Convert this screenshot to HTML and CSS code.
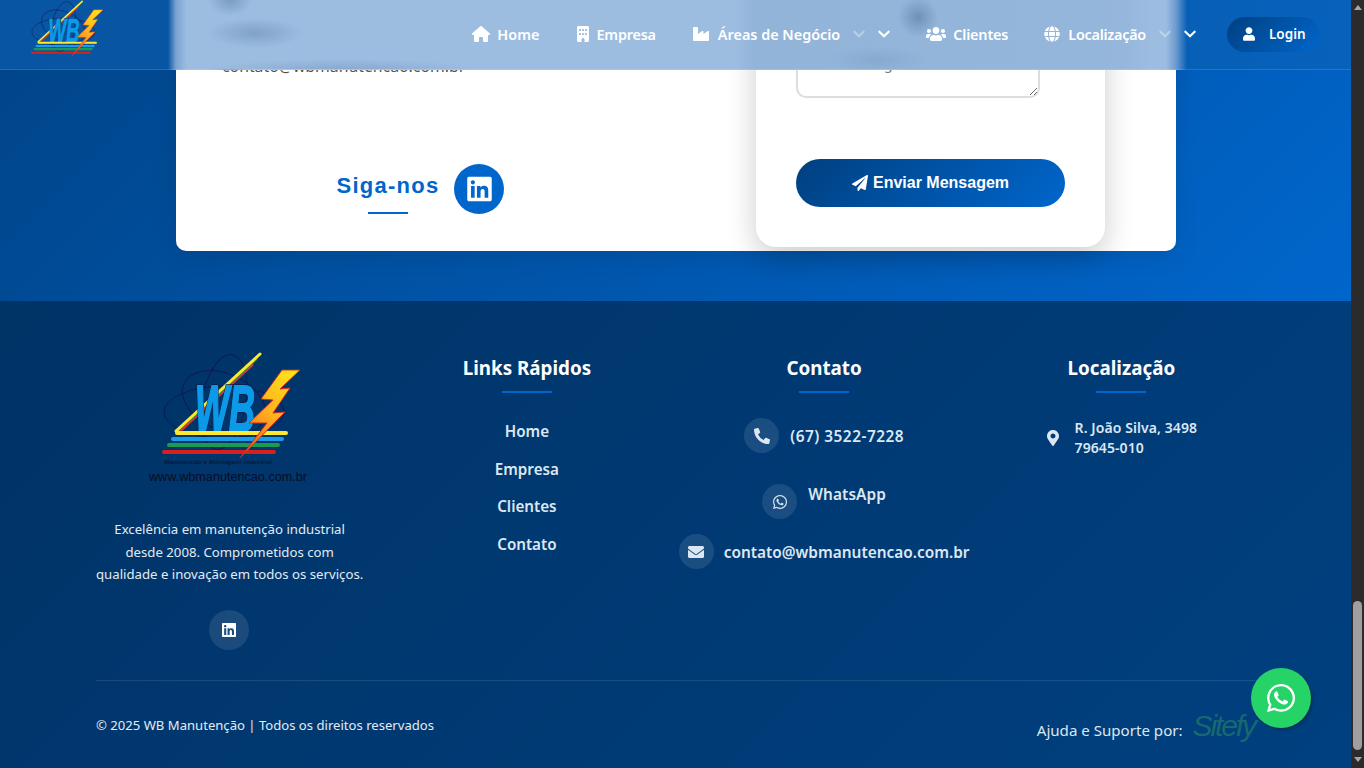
FILE: index.html
```html
<!DOCTYPE html>
<html lang="pt-BR">
<head>
<meta charset="utf-8">
<title>WB Manutenção</title>
<link rel="stylesheet" href="styles.css">
</head>
<body>
<svg class="defs" aria-hidden="true">
  <defs>
    <linearGradient id="bolt" x1="0.8" y1="0" x2="0.2" y2="1">
      <stop offset="0" stop-color="#ffe21a"/><stop offset="0.5" stop-color="#ffb020"/><stop offset="1" stop-color="#f0561e"/>
    </linearGradient>
    <symbol id="logo-mark" viewBox="0 0 200 120">
      <g fill="none" stroke="#0d1a55" stroke-width="1">
        <ellipse cx="94" cy="72" rx="60" ry="26"/>
        <ellipse cx="94" cy="62" rx="44" ry="28" transform="rotate(25 94 62)"/>
        <ellipse cx="94" cy="62" rx="22" ry="48" transform="rotate(10 94 62)"/>
      </g>
      <g fill="none" stroke-linecap="round">
        <path d="M50 91 L122 25" stroke="#d5362e" stroke-width="3"/>
        <path d="M48 90 L126 19" stroke="#1c9a52" stroke-width="3"/>
        <path d="M46 91 L130 14" stroke="#ffe92e" stroke-width="3"/>
      </g>
      <text x="65" y="91" class="logo-wb logo-wb-back" textLength="60" lengthAdjust="spacingAndGlyphs">WB</text>
      <text x="65" y="91" class="logo-wb" textLength="60" lengthAdjust="spacingAndGlyphs">WB</text>
      <g fill="none" stroke-width="4" stroke-linecap="round">
        <path d="M47 93 H156" stroke="#ffe92e"/>
        <path d="M43 99 H152" stroke="#1b9ce8"/>
        <path d="M39 105 H148" stroke="#1c9a52"/>
        <path d="M34 112 H144" stroke="#d5221f"/>
      </g>
      <polygon points="170,30 152,30 131,59 143,60 119,83 137,83 110,118 155,72 143,73 160,48 150,49" fill="url(#bolt)" stroke="#d62a20" stroke-width="1"/>
    </symbol>
    <symbol id="logo-text" viewBox="0 0 200 150">
      <text x="34" y="124" class="logo-tag" textLength="108" lengthAdjust="spacingAndGlyphs">Manutenção e Montagem Industrial</text>
      <text x="19" y="141" class="logo-url" textLength="158" lengthAdjust="spacingAndGlyphs">www.wbmanutencao.com.br</text>
    </symbol>
    <symbol id="i-home" viewBox="0 0 576 512"><path d="M575.8 255.5c0 18-15 32.1-32 32.1h-32l.7 160.2c0 2.7-.2 5.4-.5 8.1V472c0 22.1-17.9 40-40 40H456c-1.1 0-2.2 0-3.3-.1c-1.4 .1-2.8 .1-4.2 .1H416 392c-22.1 0-40-17.9-40-40V448 384c0-17.7-14.3-32-32-32H256c-17.7 0-32 14.3-32 32v64 24c0 22.1-17.9 40-40 40H160 128.1c-1.5 0-3-.1-4.5-.2c-1.2 .1-2.4 .2-3.6 .2H104c-22.1 0-40-17.9-40-40V360c0-.9 0-1.9 .1-2.8V287.6H32c-18 0-32-14-32-32.1c0-9 3-17 10-24L266.4 8c7-7 15-8 22-8s15 2 21 7L564.8 231.5c8 7 12 15 11 24z"/></symbol>
    <symbol id="i-building" viewBox="0 0 384 512"><path d="M48 0C21.5 0 0 21.5 0 48V464c0 26.5 21.5 48 48 48h96V432c0-26.5 21.5-48 48-48s48 21.5 48 48v80h96c26.5 0 48-21.5 48-48V48c0-26.5-21.5-48-48-48H48zM64 240c0-8.8 7.2-16 16-16h32c8.8 0 16 7.2 16 16v32c0 8.8-7.2 16-16 16H80c-8.8 0-16-7.2-16-16V240zm112-16h32c8.8 0 16 7.2 16 16v32c0 8.8-7.2 16-16 16H176c-8.8 0-16-7.2-16-16V240c0-8.8 7.2-16 16-16zm80 16c0-8.8 7.2-16 16-16h32c8.8 0 16 7.2 16 16v32c0 8.8-7.2 16-16 16H272c-8.8 0-16-7.2-16-16V240zM80 96h32c8.8 0 16 7.2 16 16v32c0 8.8-7.2 16-16 16H80c-8.8 0-16-7.2-16-16V112c0-8.8 7.2-16 16-16zm80 16c0-8.8 7.2-16 16-16h32c8.8 0 16 7.2 16 16v32c0 8.8-7.2 16-16 16H176c-8.8 0-16-7.2-16-16V112zM272 96h32c8.8 0 16 7.2 16 16v32c0 8.8-7.2 16-16 16H272c-8.8 0-16-7.2-16-16V112c0-8.8 7.2-16 16-16z"/></symbol>
    <symbol id="i-industry" viewBox="0 0 512 512"><path d="M475.115 163.781L336 252.309v-68.28c0-18.916-20.931-30.399-36.885-20.248L160 252.309V56c0-13.255-10.745-24-24-24H24C10.745 32 0 42.745 0 56v400c0 13.255 10.745 24 24 24h464c13.255 0 24-10.745 24-24V184.029c0-18.917-20.931-30.399-36.885-20.248z"/></symbol>
    <symbol id="i-users" viewBox="0 0 640 512"><path d="M96 224c35.3 0 64-28.7 64-64s-28.7-64-64-64-64 28.7-64 64 28.7 64 64 64zm448 0c35.3 0 64-28.7 64-64s-28.7-64-64-64-64 28.7-64 64 28.7 64 64 64zm32 32h-64c-17.6 0-33.5 7.1-45.1 18.6 40.3 22.1 68.9 62 75.1 109.4h66c17.7 0 32-14.3 32-32v-32c0-35.3-28.7-64-64-64zm-256 0c61.9 0 112-50.1 112-112S381.9 32 320 32 208 82.1 208 144s50.1 112 112 112zm76.8 32h-8.3c-20.8 10-43.9 16-68.5 16s-47.6-6-68.5-16h-8.3C179.6 288 128 339.6 128 403.2V432c0 26.5 21.5 48 48 48h288c26.5 0 48-21.5 48-48v-28.8c0-63.6-51.6-115.2-115.2-115.2zm-223.7-13.4C161.5 263.1 145.6 256 128 256H64c-35.3 0-64 28.7-64 64v32c0 17.7 14.3 32 32 32h65.9c6.3-47.4 34.9-87.3 75.2-109.4z"/></symbol>
    <symbol id="i-globe" viewBox="0 0 496 512"><path d="M336.5 160C322 70.7 287.8 8 248 8s-74 62.7-88.5 152h177zM152 256c0 22.2 1.2 43.5 3.3 64h185.3c2.1-20.5 3.3-41.8 3.3-64s-1.2-43.5-3.3-64H155.3c-2.1 20.5-3.3 41.8-3.3 64zm324.7-96c-28.6-67.9-86.5-120.4-158-141.6 24.4 33.8 41.2 84.7 50 141.6h108zM177.2 18.4C105.8 39.6 47.8 92.1 19.3 160h108c8.7-56.9 25.5-107.8 49.9-141.6zM487.4 192H372.7c2.1 21 3.3 42.5 3.3 64s-1.2 43-3.3 64h114.6c5.5-20.5 8.6-41.8 8.6-64s-3.1-43.5-8.5-64zM120 256c0-21.5 1.2-43 3.3-64H8.6C3.2 212.5 0 233.8 0 256s3.2 43.5 8.6 64h114.6c-2-21-3.2-42.5-3.2-64zm39.5 96c14.5 89.3 48.7 152 88.5 152s74-62.7 88.5-152h-177zm159.3 141.6c71.4-21.2 129.4-73.7 158-141.6h-108c-8.8 56.9-25.6 107.8-50 141.6zM19.3 352c28.6 67.9 86.5 120.4 158 141.6-24.4-33.8-41.2-84.7-50-141.6h-108z"/></symbol>
    <symbol id="i-user" viewBox="0 0 448 512"><path d="M224 256c70.7 0 128-57.3 128-128S294.7 0 224 0 96 57.3 96 128s57.3 128 128 128zm89.6 32h-16.7c-22.2 10.2-46.9 16-72.9 16s-50.6-5.8-72.9-16h-16.7C60.2 288 0 348.2 0 422.4V464c0 26.5 21.5 48 48 48h352c26.5 0 48-21.5 48-48v-41.6c0-74.2-60.2-134.4-134.4-134.4z"/></symbol>
    <symbol id="i-chev" viewBox="0 0 448 512"><path d="M207.029 381.476L12.686 187.132c-9.373-9.373-9.373-24.569 0-33.941l22.667-22.667c9.357-9.357 24.522-9.375 33.901-.04L224 284.505l154.745-154.021c9.379-9.335 24.544-9.317 33.901.04l22.667 22.667c9.373 9.373 9.373 24.569 0 33.941L240.971 381.476c-9.373 9.372-24.569 9.372-33.942 0z"/></symbol>
    <symbol id="i-plane" viewBox="0 0 512 512"><path d="M476 3.2L12.5 270.6c-18.1 10.4-15.8 35.6 2.2 43.2L121 358.4l287.3-253.2c5.5-4.9 13.3 2.6 8.6 8.3L176 407v80.5c0 23.6 28.5 32.9 42.5 15.8L282 426l124.6 52.2c14.2 6 30.4-2.9 33-18.2l72-432C515 7.8 493.3-6.8 476 3.2z"/></symbol>
    <symbol id="i-phone" viewBox="0 0 512 512"><path d="M497.39 361.8l-112-48a24 24 0 0 0-28 6.9l-49.6 60.6A370.66 370.66 0 0 1 130.6 204.11l60.6-49.6a23.94 23.94 0 0 0 6.9-28l-48-112A24.16 24.16 0 0 0 122.6.61l-104 24A24 24 0 0 0 0 48c0 256.5 207.9 464 464 464a24 24 0 0 0 23.4-18.6l24-104a24.29 24.29 0 0 0-14.01-27.6z"/></symbol>
    <symbol id="i-mail" viewBox="0 0 512 512"><path d="M502.3 190.8c3.9-3.1 9.7-.2 9.7 4.7V400c0 26.5-21.5 48-48 48H48c-26.5 0-48-21.5-48-48V195.6c0-5 5.7-7.8 9.7-4.7 22.4 17.4 52.1 39.5 154.1 113.6 21.1 15.4 56.7 47.8 92.2 47.6 35.7.3 72-32.8 92.3-47.6 102-74.1 131.6-96.3 154-113.7zM256 320c23.2.4 56.6-29.2 73.4-41.4 132.7-96.3 142.8-104.7 173.4-128.7 5.8-4.5 9.2-11.5 9.2-18.9v-19c0-26.5-21.5-48-48-48H48C21.5 64 0 85.5 0 112v19c0 7.4 3.4 14.3 9.2 18.9 30.6 23.9 40.7 32.4 173.4 128.7 16.8 12.2 50.2 41.8 73.4 41.4z"/></symbol>
    <symbol id="i-pin" viewBox="0 0 384 512"><path d="M172.268 501.67C26.97 291.031 0 269.413 0 192 0 85.961 85.961 0 192 0s192 85.961 192 192c0 77.413-26.97 99.031-172.268 309.67-9.535 13.774-29.93 13.773-39.464 0zM192 272c44.183 0 80-35.817 80-80s-35.817-80-80-80-80 35.817-80 80 35.817 80 80 80z"/></symbol>
    <symbol id="i-linkedin" viewBox="0 0 448 512"><path d="M416 32H31.9C14.3 32 0 46.5 0 64.3v383.4C0 465.5 14.3 480 31.9 480H416c17.6 0 32-14.5 32-32.3V64.3c0-17.8-14.4-32.3-32-32.3zM135.4 416H69V202.2h66.5V416zm-33.2-243c-21.3 0-38.5-17.3-38.5-38.5S80.9 96 102.2 96c21.2 0 38.5 17.3 38.5 38.5 0 21.3-17.2 38.5-38.5 38.5zm282.1 243h-66.4V312c0-24.8-.5-56.7-34.5-56.7-34.6 0-39.9 27-39.9 54.9V416h-66.4V202.2h63.7v29.2h.9c8.9-16.8 30.6-34.5 62.9-34.5 67.2 0 79.7 44.3 79.7 101.9V416z"/></symbol>
    <symbol id="i-whatsapp" viewBox="0 0 448 512"><path d="M380.9 97.1C339 55.1 283.2 32 223.9 32c-122.4 0-222 99.6-222 222 0 39.1 10.2 77.3 29.6 111L0 480l117.7-30.9c32.4 17.7 68.9 27 106.1 27h.1c122.3 0 224.1-99.6 224.1-222 0-59.3-25.2-115-67.1-157zm-157 341.6c-33.2 0-65.7-8.9-94-25.7l-6.7-4-69.8 18.3L72 359.2l-4.4-7c-18.5-29.4-28.2-63.3-28.2-98.2 0-101.7 82.8-184.5 184.6-184.5 49.3 0 95.6 19.2 130.4 54.1 34.8 34.9 56.2 81.2 56.1 130.5 0 101.8-84.9 184.6-186.6 184.6zm101.2-138.2c-5.5-2.8-32.8-16.2-37.9-18-5.1-1.9-8.8-2.8-12.5 2.8-3.7 5.6-14.3 18-17.6 21.8-3.2 3.7-6.5 4.2-12 1.4-32.6-16.3-54-29.1-75.5-66-5.7-9.8 5.7-9.1 16.3-30.3 1.8-3.7.9-6.9-.5-9.7-1.4-2.8-12.5-30.1-17.1-41.2-4.5-10.8-9.1-9.3-12.5-9.5-3.2-.2-6.9-.2-10.6-.2-3.7 0-9.7 1.4-14.8 6.9-5.1 5.6-19.4 19-19.4 46.3 0 27.3 19.9 53.7 22.6 57.4 2.8 3.7 39.1 59.7 94.8 83.8 35.2 15.2 49 16.5 66.6 13.9 10.7-1.6 32.8-13.4 37.4-26.4 4.6-13 4.6-24.1 3.2-26.4-1.3-2.5-5-3.9-10.5-6.6z"/></symbol>
  </defs>
</svg>

<div class="page">
  <header class="site-header">
    <svg class="header-logo"><use href="#logo-mark"/></svg>
    <nav class="nav">
      <a class="nav-item item-home"><svg class="ni ni-home"><use href="#i-home"/></svg>Home</a>
      <a class="nav-item item-empresa"><svg class="ni ni-building"><use href="#i-building"/></svg>Empresa</a>
      <a class="nav-item item-areas"><svg class="ni ni-industry"><use href="#i-industry"/></svg>Áreas de Negócio<svg class="chev chev-faded"><use href="#i-chev"/></svg><svg class="chev"><use href="#i-chev"/></svg></a>
      <a class="nav-item item-clientes"><svg class="ni ni-users"><use href="#i-users"/></svg>Clientes</a>
      <a class="nav-item item-loc"><svg class="ni ni-globe"><use href="#i-globe"/></svg>Localização<svg class="chev chev-faded"><use href="#i-chev"/></svg><svg class="chev"><use href="#i-chev"/></svg></a>
    </nav>
    <a class="login"><svg class="login-icon"><use href="#i-user"/></svg>Login</a>
  </header>

  <section class="contact">
    <div class="contact-card">
      <div class="info-col">
        <div class="info-block">
          <svg class="info-icon"><use href="#i-mail"/></svg>
          <div class="info-label">E-mail</div>
          <div class="info-value">contato@wbmanutencao.com.br</div>
        </div>
        <div class="follow">
          <div class="follow-title">Siga-nos</div>
          <a class="follow-link"><svg class="follow-icon"><use href="#i-linkedin"/></svg></a>
        </div>
      </div>
      <form class="form-card">
        <svg class="form-icon"><use href="#i-mail"/></svg>
        <textarea class="form-area" placeholder="Sua mensagem"></textarea>
        <button class="send" type="button"><svg class="send-icon"><use href="#i-plane"/></svg>Enviar Mensagem</button>
      </form>
    </div>
  </section>

  <footer class="footer">
    <div class="footer-grid">
      <div class="col col-brand">
        <svg class="footer-logo" viewBox="0 0 200 150"><use href="#logo-mark" width="200" height="120"/><use href="#logo-text" width="200" height="150"/></svg>
        <p class="about">Excelência em manutenção industrial<br>desde 2008. Comprometidos com<br>qualidade e inovação em todos os serviços.</p>
        <a class="social"><svg class="social-icon"><use href="#i-linkedin"/></svg></a>
      </div>
      <div class="col">
        <h4 class="col-title">Links Rápidos</h4>
        <ul class="links">
          <li>Home</li>
          <li>Empresa</li>
          <li>Clientes</li>
          <li>Contato</li>
        </ul>
      </div>
      <div class="col">
        <h4 class="col-title">Contato</h4>
        <div class="contact-row row-phone"><span class="round"><svg class="ri-phone"><use href="#i-phone"/></svg></span><span class="phone-text">(67) 3522-7228</span></div>
        <div class="contact-row row-whats"><span class="round"><svg class="ri-whats"><use href="#i-whatsapp"/></svg></span><span class="whats-text">WhatsApp</span></div>
        <div class="contact-row row-mail"><span class="round"><svg class="ri-mail"><use href="#i-mail"/></svg></span><span class="mail-text">contato@wbmanutencao.com.br</span></div>
      </div>
      <div class="col">
        <h4 class="col-title">Localização</h4>
        <div class="address"><svg class="ri-pin"><use href="#i-pin"/></svg><span>R. João Silva, 3498<br>79645-010</span></div>
      </div>
    </div>
    <div class="footer-bottom">
      <span class="copy">© 2025 WB Manutenção | Todos os direitos reservados</span>
      <span class="support"><span class="support-label">Ajuda e Suporte por:</span><span class="sitefy">Sitefy</span></span>
    </div>
  </footer>

  <a class="whats-float"><svg class="whats-float-icon"><use href="#i-whatsapp"/></svg></a>
</div>

<div class="scrollbar" aria-hidden="true">
  <span class="arrow arrow-up"></span>
  <span class="thumb"></span>
  <span class="arrow arrow-down"></span>
</div>
</body>
</html>
```
FILE: styles.css
```css
* { box-sizing: border-box; }
html, body { margin: 0; height: 768px; overflow: hidden; }
body { display: flex; font-family: "Noto Sans", sans-serif; background: #003a75; }
.defs { position: absolute; width: 0; height: 0; }
svg { fill: currentColor; display: block; flex: none; }

.page { position: relative; width: 1351px; height: 768px; overflow: hidden; flex: none; }

/* scrollbar */
.scrollbar { width: 13px; height: 768px; background: #2b2b2b; display: flex; flex-direction: column; align-items: center; position: relative; }
.arrow { width: 0; height: 0; border-left: 4.5px solid transparent; border-right: 4.5px solid transparent; position: absolute; }
.arrow-up { top: 5px; border-bottom: 5px solid #a6a6a6; }
.arrow-down { bottom: 6px; border-top: 5px solid #a6a6a6; }
.thumb { position: absolute; top: 601px; left: 2px; width: 9px; height: 149px; background: #9f9f9f; border-radius: 5px; }

/* header: a frosted bar, its blurred backdrop painted as gradient layers */
.site-header {
  position: absolute; z-index: 5; top: 0; left: 0; width: 100%; height: 70px;
  display: flex; align-items: center; padding: 0 31px 1px 14px;
  border-bottom: 1px solid rgba(255, 255, 255, 0.13); color: #fff;
  background-color: #9cbde0;
  background-image:
    radial-gradient(ellipse 22px 16px at 230px 0, rgba(95, 130, 170, 0.55), rgba(95, 130, 170, 0)),
    radial-gradient(ellipse 48px 15px at 255px 33px, rgba(100, 135, 175, 0.5), rgba(100, 135, 175, 0)),
    radial-gradient(ellipse 135px 11px at 343px 70px, rgba(100, 135, 175, 0.38), rgba(100, 135, 175, 0)),
    radial-gradient(ellipse 20px 20px at 918px 17px, rgba(95, 130, 170, 0.7), rgba(95, 130, 170, 0)),
    radial-gradient(ellipse 50px 14px at 878px 60px, rgba(100, 135, 175, 0.25), rgba(100, 135, 175, 0)),
    linear-gradient(90deg, #0856a3 0, #0856a3 168px, #7ba3d0 176px, #9cbde0 187px, #9cbde0 735px, #92b4d9 755px, #94b6da 1105px, #96b7db 1125px, #9cbde0 1150px, #9cbde0 1166px, #6d9ad0 1176px, #075fb6 1187px, #0762bc 100%);
}
.header-logo { width: 105px; height: 63px; align-self: flex-start; margin-top: -6px; }
.nav { margin-left: auto; display: flex; align-items: center; gap: 37px; font-size: 14.4px; font-weight: 600; }
.nav-item { display: flex; align-items: center; white-space: nowrap; }
.item-home { letter-spacing: 0.05px; }
.item-empresa { letter-spacing: -0.2px; }
.item-areas { margin-right: -1px; }
.item-clientes { letter-spacing: -0.15px; }
.item-loc { letter-spacing: -0.25px; margin-left: -1px; }
.ni { height: 16px; margin-right: 8px; }
.ni-home { width: 18px; margin-right: 7px; }
.ni-building { width: 12px; }
.ni-industry { width: 16px; margin-right: 9px; }
.ni-users { width: 20px; margin-right: 7px; }
.ni-globe { width: 16px; }
.chev { width: 12px; height: 14px; margin-left: 13px; }
.chev-faded { opacity: 0.35; }
.login { margin-left: 31px; height: 35px; width: 93px; padding-left: 16px; display: flex; align-items: center; border-radius: 18px; background: linear-gradient(135deg, #004080, #0066cc); font-size: 13.5px; font-weight: 600; }
.login-icon { width: 12px; height: 14px; margin-right: 14px; }

/* contact */
.contact { height: 501px; margin-top: -200px; padding: 0 175px 50px 176px; background: linear-gradient(135deg, #004080, #0066cc); }
.contact-card { height: 451px; background: #fff; border-radius: 10px; box-shadow: 0 5px 25px rgba(0, 0, 0, 0.1); display: flex; justify-content: space-between; padding-right: 71px; }
.info-col { width: 490px; padding: 186px 0 37px 46px; display: flex; flex-direction: column; color: #333; }
.info-icon { width: 22px; height: 22px; color: #444; margin-bottom: 15px; }
.info-label { font-size: 16px; font-weight: 700; line-height: 22px; margin-bottom: 10px; color: #333; }
.info-value { font-size: 15.8px; line-height: 22px; color: #555; }
.follow { margin-top: auto; display: flex; align-items: center; justify-content: center; gap: 15px; margin-left: -47px; }
.follow-title { position: relative; font-family: "Liberation Sans", sans-serif; font-size: 22px; font-weight: 700; letter-spacing: 1.25px; color: #0066cc; margin-top: -7px; }
.follow-title::after { content: ""; position: absolute; left: 50%; margin-left: -20px; bottom: -15px; width: 40px; height: 2px; background: #0066cc; }
.follow-link { width: 50px; height: 50px; border-radius: 50%; background: #0066cc; color: #fff; display: flex; align-items: center; justify-content: center; }
.follow-icon { width: 25px; height: 28px; }
.form-card { width: 349px; height: 447px; background: #fff; border-radius: 20px; box-shadow: 0 10px 30px rgba(0, 0, 0, 0.2); padding: 208px 40px 40px; display: flex; flex-direction: column; }
.form-icon { width: 20px; height: 20px; color: #555; margin: 0 0 16px 112px; }
.form-area { display: block; width: 244px; height: 54px; border: 2px solid #ddd; border-radius: 10px; padding: 8px 14px; font-family: "Noto Sans", sans-serif; font-size: 14px; margin-bottom: 61px; background: #fff; outline: 0; }
.form-area::placeholder { color: #777; }
.send { height: 48px; width: 269px; border: 0; border-radius: 24px; background: linear-gradient(135deg, #004080, #0066cc); color: #fff; font-family: "Liberation Sans", sans-serif; font-size: 16px; font-weight: 700; display: flex; align-items: center; justify-content: center; gap: 5px; padding: 0; }
.send-icon { width: 16px; height: 16px; }

/* footer */
.footer { height: 467px; padding: 39px 96px 0; background: linear-gradient(135deg, #003366, #004080); color: #fff; }
.footer-grid { display: grid; grid-template-columns: repeat(4, minmax(0, 1fr)); gap: 30px; height: 341px; border-bottom: 1px solid rgba(255, 255, 255, 0.1); }
.col { display: flex; flex-direction: column; align-items: center; }
.footer-logo { width: 200px; height: 150px; }
.logo-wb { font-family: "Liberation Sans", sans-serif; font-size: 65px; font-weight: 700; font-style: italic; fill: #0c9ae8; stroke: #0c9ae8; stroke-width: 2.2; }
.logo-wb-back { fill: #0b1a4a; stroke: #0b1a4a; stroke-width: 3.6; }
.logo-tag { font-family: "Liberation Sans", sans-serif; font-size: 6px; font-weight: 700; font-style: italic; fill: #0a1838; stroke: none; }
.logo-url { font-family: "Liberation Sans", sans-serif; font-size: 12px; fill: #070d24; stroke: none; }
.about { margin: 28px 0 24px; font-size: 13.2px; line-height: 22.5px; text-align: center; color: #e3ebf3; white-space: nowrap; }
.social { width: 40px; height: 40px; border-radius: 50%; background: rgba(255, 255, 255, 0.1); display: flex; align-items: center; justify-content: center; margin-left: -1px; }
.social-icon { width: 14px; height: 16px; }
.col-title { position: relative; margin: 15px 0 0; font-size: 18.8px; font-weight: 700; line-height: 26px; color: #fff; }
.col-title::after { content: ""; position: absolute; left: 50%; margin-left: -25px; top: 36px; width: 50px; height: 2px; background: #0066cc; }
.links { list-style: none; margin: 39px 0 0; padding: 0; text-align: center; font-size: 15.2px; font-weight: 600; line-height: 22px; color: #dce7f2; display: flex; flex-direction: column; gap: 15.6px; }
.contact-row { display: flex; align-items: center; justify-content: center; gap: 11px; white-space: nowrap; font-size: 15.4px; font-weight: 600; color: #dce7f2; }
.round { width: 35px; height: 35px; border-radius: 50%; background: rgba(255, 255, 255, 0.1); display: flex; align-items: center; justify-content: center; color: #dce7f2; flex: none; }
.row-phone { margin-top: 37px; }
.row-whats { margin-top: 31px; }
.row-mail { margin-top: 15px; gap: 10px; }
.phone-text { letter-spacing: 0.5px; margin-top: 2px; }
.mail-text { margin-top: 2px; }
.whats-text { margin-top: -14px; letter-spacing: 0.12px; }
.ri-phone { width: 16px; height: 16px; }
.ri-whats { width: 14px; height: 16px; }
.ri-mail { width: 16px; height: 16px; }
.address { display: flex; align-items: center; gap: 16px; margin: 37px 0 0 1px; font-size: 14px; font-weight: 600; line-height: 20px; letter-spacing: 0.08px; color: #dce7f2; }
.ri-pin { width: 12px; height: 16px; }
.footer-bottom { display: flex; justify-content: space-between; align-items: center; height: 88px; }
.copy { font-size: 13.1px; color: #e3ebf3; }
.support { display: flex; align-items: center; gap: 10px; font-size: 15.1px; color: #dce7f2; }
.support-label { margin-top: 10px; }
.sitefy { font-family: "Liberation Sans", sans-serif; font-style: italic; font-size: 30px; letter-spacing: -2.1px; color: #17696f; margin-top: 2px; }

.whats-float { position: absolute; z-index: 6; left: 1251px; top: 668px; width: 60px; height: 60px; border-radius: 50%; background: #25d366; color: #fff; display: flex; align-items: center; justify-content: center; box-shadow: 2px 2px 3px rgba(0, 0, 0, 0.25); }
.whats-float-icon { width: 28px; height: 32px; }
```
